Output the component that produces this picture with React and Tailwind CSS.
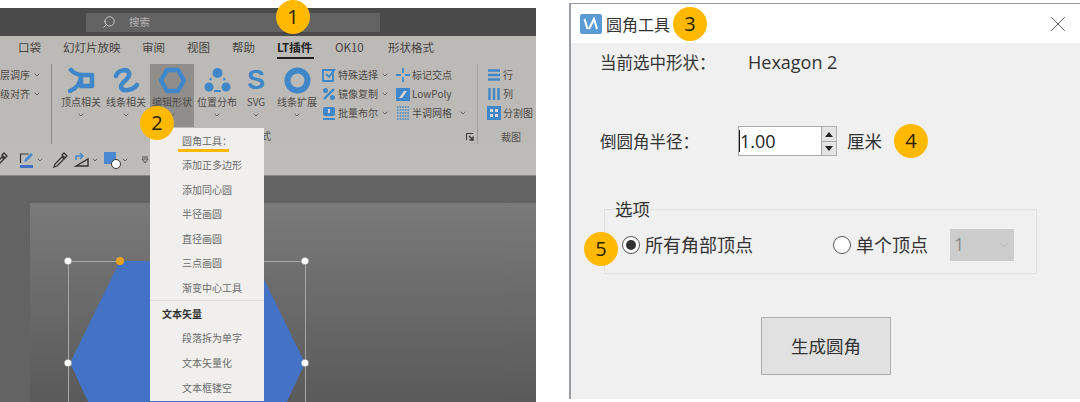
import { ChevronDown, Search, X } from 'lucide-react';

const cjk = 'font-["Noto_Sans_CJK_SC","Liberation_Sans",sans-serif]';
const BLUE = '#3f87c8';

function Badge({ n, className }) {
  return (
    <div className={`absolute flex h-[34px] w-[34px] items-center justify-center rounded-full bg-[#ffb900] font-["Open_Sans",sans-serif] text-[20px] text-[#2a2200] ${className}`}>
      {n}
    </div>
  );
}

function Caret({ className = '' }) {
  return <ChevronDown size={8} strokeWidth={2.5} className={`shrink-0 text-[#55534f] ${className}`} />;
}

function BigButton({ label, width, active, children }) {
  return (
    <div className={`flex h-[63px] flex-col items-center pt-[3px] ${width} ${active ? 'bg-[#8f8e8b]' : ''}`}>
      <div className="h-[27px] w-[27px]">{children}</div>
      <div className="mt-[1px] whitespace-nowrap text-[10px] leading-[14px] text-[#4d4b48]">{label}</div>
      <Caret className="mt-[2px]" />
    </div>
  );
}

function SmallItem({ icon, label, caret }) {
  return (
    <div className="flex h-[19px] items-center gap-[1px] whitespace-nowrap text-[10px] text-[#4d4b48]">
      <svg width="14" height="14" viewBox="0 0 14 14" className="shrink-0">{icon}</svg>
      <span className="ml-[1px]">{label}</span>
      {caret && <Caret className="ml-[2px]" />}
    </div>
  );
}

function MenuItem({ children, tall }) {
  return <div className={`flex items-center pl-[32px] text-[10px] text-[#6a6a6a] ${tall ? 'h-[25px]' : 'h-[24.5px]'}`}>{children}</div>;
}

function Tab({ children, width, active }) {
  return (
    <div className={`relative shrink-0 whitespace-nowrap text-[11.5px] ${width} ${active ? 'font-bold text-[#222]' : 'text-[#45433f]'}`}>
      {children}
      {active && <div className="absolute left-0 top-[18px] h-[2px] w-[37px] bg-[#222]" />}
    </div>
  );
}

function LeftPanel() {
  return (
    <div className={`relative flex h-[402px] w-[536px] shrink-0 flex-col overflow-hidden pt-2 ${cjk}`}>
      {/* title bar */}
      <div className="flex h-[28px] shrink-0 items-center bg-[#4a4a4a]">
        <div className="ml-[86px] flex h-[19px] w-[294px] items-center bg-[#636363] text-[10.5px] text-[#b5b5b5]">
          <Search size={14} strokeWidth={1.5} className="ml-[16px] -scale-x-100 text-[#d0d0d0]" />
          <span className="ml-[13px]">搜索</span>
        </div>
      </div>

      {/* tabs */}
      <div className="flex h-[28px] shrink-0 items-center bg-[#bcbab6] pl-[18px] pb-[4px]">
        <Tab width="w-[45px]">口袋</Tab>
        <Tab width="w-[79px]">幻灯片放映</Tab>
        <Tab width="w-[45px]">审阅</Tab>
        <Tab width="w-[45px]">视图</Tab>
        <Tab width="w-[45px]">帮助</Tab>
        <Tab width="w-[58px]" active>LT插件</Tab>
        <Tab width="w-[53px]">OK10</Tab>
        <Tab width="w-[60px]">形状格式</Tab>
      </div>

      {/* ribbon */}
      <div className="flex h-[80px] shrink-0 bg-[#bcbab6]">
        <div className="flex w-[52px] shrink-0 flex-col border-r border-[#8e8c88] pt-[1px] text-[10px] text-[#4d4b48]">
          <div className="flex h-[19px] items-center gap-[3px]">层调序<Caret /></div>
          <div className="flex h-[19px] items-center gap-[3px]">级对齐<Caret /></div>
        </div>
        <div className="ml-[8px] flex flex-col">
          <div className="flex gap-[3px]">
            <BigButton label="顶点相关" width="w-[42px]">
              <svg viewBox="0 0 27 27" fill="none" stroke={BLUE} strokeWidth="4.5" strokeLinecap="round" strokeLinejoin="round">
                <path d="M3 3c3 3 7 5 11 5h10v11H13V9c0 6-4 12-11 15" />
              </svg>
            </BigButton>
            <BigButton label="线条相关" width="w-[42px]">
              <svg viewBox="0 0 27 27" fill="none" stroke={BLUE} strokeWidth="4.5" strokeLinecap="round">
                <path d="M3 9c2-6 11-8 13-3 2 6-9 9-8 14 1 5 11 4 16-2" />
              </svg>
            </BigButton>
            <BigButton label="编辑形状" width="w-[44px]" active>
              <svg viewBox="0 0 27 27" fill="none" stroke={BLUE} strokeWidth="4.5" strokeLinejoin="round">
                <path d="M8 3h11l6 10.5L19 24H8L2 13.5z" />
              </svg>
            </BigButton>
            <BigButton label="位置分布" width="w-[40px]">
              <svg viewBox="0 0 27 27" fill={BLUE}>
                <circle cx="13.5" cy="6" r="5" />
                <circle cx="5" cy="20" r="4.5" />
                <circle cx="22" cy="20" r="4.5" />
                <path d="M7 10l-2 3 3 .6zM20 10l2 3-3 .6zM10 23h7v2h-7z" />
              </svg>
            </BigButton>
            <BigButton label="SVG" width="w-[32px]">
              <div className='text-center font-["Liberation_Sans",sans-serif] text-[27px] font-bold leading-[27px] text-[#3f87c8]'>S</div>
            </BigButton>
            <div className="ml-[1px]">
              <BigButton label="线条扩展" width="w-[42px]">
                <svg viewBox="0 0 27 27" fill="none" stroke={BLUE} strokeWidth="6">
                  <circle cx="13.5" cy="13.5" r="10" />
                </svg>
              </BigButton>
            </div>
          </div>
          <div className="mt-[2px] pl-[171px] text-[10px] leading-[14px] text-[#55534f]">形状格式</div>
        </div>

        <div className="ml-[4px] flex w-[74px] shrink-0 flex-col pt-[1px]">
          <SmallItem caret label="特殊选择" icon={<><path d="M1 2h10v11H1z" fill="none" stroke={BLUE} strokeWidth="1.8" /><path d="M4 6l3 3 6-8" fill="none" stroke={BLUE} strokeWidth="1.8" /></>} />
          <SmallItem caret label="镜像复制" icon={<><path d="M2 12L12 2" stroke={BLUE} strokeWidth="2.4" /><circle cx="3.5" cy="3.5" r="2.5" fill={BLUE} /><circle cx="10.5" cy="10.5" r="2.5" fill={BLUE} /></>} />
          <SmallItem caret label="批量布尔" icon={<><path d="M3 1h8a2 2 0 0 1 2 2v5a2 2 0 0 1-2 2H3a2 2 0 0 1-2-2V3a2 2 0 0 1 2-2z" fill={BLUE} /><path d="M6 3h2v4H6z" fill="#d8d6d2" /><path d="M1 12h12v2H1z" fill={BLUE} /></>} />
        </div>

        <div className="flex w-[82px] shrink-0 flex-col border-r border-[#a09e9a] pt-[1px]">
          <SmallItem label="标记交点" icon={<path d="M7 0v5M7 9v5M0 7h5M9 7h5" stroke={BLUE} strokeWidth="1.8" />} />
          <SmallItem label="LowPoly" icon={<><path d="M0 1h14v13H0z" fill={BLUE} /><path d="M3 11l5-7h3l-5 7z" fill="#d8d6d2" /></>} />
          <div className="flex items-center">
            <SmallItem label="半调网格" icon={<path d="M1 1h12M1 4h12M1 7h12M1 10h12M1 13h12" stroke={BLUE} strokeWidth="1.6" strokeDasharray="1.6 1" />} />
            <Caret className="ml-[7px]" />
          </div>
          <svg className="ml-auto mr-[3px] mt-[11px]" width="8" height="8" viewBox="0 0 8 8" fill="none" stroke="#3a3a3a">
            <path d="M.5 7V.5H7" />
            <path d="M3 3l3.5 3.5M7 3.5V7H3.5" strokeWidth="1.4" />
          </svg>
        </div>

        <div className="ml-[9px] flex flex-col pt-[1px]">
          <SmallItem label="行" icon={<path d="M1 2.5h12M1 7h12M1 11.5h12" stroke={BLUE} strokeWidth="2.4" />} />
          <SmallItem label="列" icon={<path d="M2.5 1v12M7 1v12M11.5 1v12" stroke={BLUE} strokeWidth="2.4" />} />
          <SmallItem label="分割图" icon={<><path d="M0 0h14v14H0z" fill={BLUE} /><path d="M3 3h3v3H3zM8 3h3v3H8zM3 8h3v3H3zM8 8h3v3H8z" fill="#d8d6d2" /></>} />
          <div className="mt-[8px] pl-[14px] text-[10px] leading-[14px] text-[#55534f]">裁图</div>
        </div>
      </div>

      {/* quick toolbar */}
      <div className="flex h-[32px] shrink-0 items-center border-b border-[#8a8885] bg-[#bebcb8]">
        <svg className="ml-[-7px] shrink-0" width="16" height="16" viewBox="0 0 16 16" fill="none" stroke="#333" strokeWidth="1.3">
          <path d="M1 15l1-3 7-7 2 2-7 7zM9 3l2-2 3 3-2 2z" />
        </svg>
        <svg className="ml-[10px] shrink-0" width="16" height="16" viewBox="0 0 16 16" fill="none" stroke="#333" strokeWidth="1.2">
          <path d="M1.5 11V2h8" />
          <path d="M1 14.5h13" stroke="#3f6fc4" strokeWidth="3" />
          <path d="M5 10l1-3 6-6 2 2-6 6z" fill="#4a88d0" stroke="none" />
        </svg>
        <Caret className="ml-[1px]" />
        <svg className="ml-[9px] shrink-0" width="16" height="16" viewBox="0 0 16 16" fill="none" stroke="#333" strokeWidth="1.3">
          <path d="M1 15l1-3 7-7 2 2-7 7zM9 3l2-2 3 3-2 2z" />
        </svg>
        <svg className="ml-[5px] shrink-0" width="16" height="16" viewBox="0 0 16 16" fill="none" strokeWidth="1.4">
          <path d="M2 14L14 7v7z" stroke="#333" />
          <path d="M2 8V4h6M6 1l3 3-3 3" stroke={BLUE} />
        </svg>
        <Caret className="ml-[1px]" />
        <div className="relative ml-[5px] h-[16px] w-[17px] shrink-0">
          <div className="h-[12px] w-[12px] bg-[#4a88d0]" />
          <div className="absolute bottom-[-1px] right-0 h-[10px] w-[10px] rounded-full border border-[#333] bg-white" />
        </div>
        <Caret />
        <svg className="ml-[12px] shrink-0" width="8" height="8" viewBox="0 0 8 8">
          <path d="M1 1h6" stroke="#55534f" />
          <path d="M1 3h6L4 7z" fill="none" stroke="#55534f" />
        </svg>
      </div>

      {/* canvas */}
      <div className="flex min-h-0 flex-1 flex-col bg-[#636363] pl-[30px] pt-[27px]">
        <div className="relative flex-1 bg-gradient-to-b from-[#7a7a7a] to-[#5a5a5a]">
          <svg className="absolute left-[-30px] top-0" width="506" height="199" viewBox="0 0 506 199">
            <rect x="68.5" y="58.5" width="237" height="160" fill="none" stroke="#a8a8a8" />
            <path d="M120 58h135l50 102-42 90H112L70 160z" fill="#4472c4" />
            {[[68, 58], [305, 58], [68, 160], [305, 160]].map(([cx, cy]) => (
              <circle key={cx + '-' + cy} cx={cx} cy={cy} r="3.6" fill="#fff" stroke="#999" strokeWidth="0.5" />
            ))}
            <circle cx="120" cy="58" r="4" fill="#e8a020" />
          </svg>
        </div>
      </div>

      {/* dropdown */}
      <div className="absolute left-[150px] top-[128px] w-[114px] bg-[#f0efee] pb-[1px]">
        <MenuItem>圆角工具：</MenuItem>
        <div className="absolute left-[28px] top-[21px] h-[3px] w-[51px] bg-[#ffb900]" />
        <MenuItem>添加正多边形</MenuItem>
        <MenuItem>添加同心圆</MenuItem>
        <MenuItem>半径画圆</MenuItem>
        <MenuItem>直径画圆</MenuItem>
        <MenuItem>三点画圆</MenuItem>
        <MenuItem>渐变中心工具</MenuItem>
        <div className="border-t border-[#dcdbd9] pl-[12px] pt-[1px] text-[10px] font-bold leading-[23px] text-[#333]">文本矢量</div>
        <MenuItem tall>段落拆为单字</MenuItem>
        <MenuItem tall>文本矢量化</MenuItem>
        <MenuItem tall>文本框镂空</MenuItem>
      </div>

      <Badge n="1" className="left-[276px] top-0" />
      <Badge n="2" className="left-[140px] top-[106px]" />
    </div>
  );
}

function Dialog() {
  return (
    <div className={`relative ml-[33px] mt-[3px] flex h-[396px] w-[511px] shrink-0 flex-col border-l-2 border-t border-[#9a9ca8] bg-[#f0f0f0] text-[16.5px] text-[#333] ${cjk}`}>
      <div className="flex h-[39px] shrink-0 items-center bg-white pl-[9px]">
        <svg width="22" height="20" viewBox="0 0 22 20">
          <rect width="22" height="20" rx="2" fill="#5b9bd5" />
          <path d="M4.5 5l3 10M9 15l5-10 3 10" fill="none" stroke="#fff" strokeWidth="2" />
        </svg>
        <span className="ml-[4px] text-[16px] text-[#333]">圆角工具</span>
        <X size={26} strokeWidth={0.9} className="ml-auto mr-[9px] text-[#555]" />
      </div>

      <div className="mt-[7px] flex h-[24px] items-center pl-[29px]">
        <span className="w-[148px]">当前选中形状：</span>
        <span className='font-["Open_Sans",sans-serif] text-[18px]'>Hexagon 2</span>
      </div>

      <div className="mt-[52px] flex h-[30px] items-center pl-[29px]">
        <span className="w-[138px]">倒圆角半径：</span>
        <div className="flex h-[30px] w-[84px] items-center border border-[#a8a8a8] bg-white">
          <span className="border-l border-[#111] font-['Open_Sans',sans-serif] text-[18px] leading-[22px] text-[#222]">1.00</span>
        </div>
        <div className="flex h-[30px] w-[15px] flex-col justify-center gap-[1px] border border-l-0 border-[#b0b0b0] bg-[#e4e4e4] text-center">
          <div className="mx-auto h-0 w-0 border-x-[4px] border-b-[5px] border-x-transparent border-b-[#222]" />
          <div className="my-[3px] h-px bg-[#aaa]" />
          <div className="mx-auto h-0 w-0 border-x-[4px] border-t-[5px] border-x-transparent border-t-[#222]" />
        </div>
        <span className="ml-[10px] text-[17.5px]">厘米</span>
      </div>

      <div className="relative ml-[33px] mt-[53px] flex h-[65px] w-[433px] items-center border border-[#e2e2e2] pl-[17px] pt-[6px]">
        <div className="absolute left-[9px] top-[-12px] bg-[#f0f0f0] px-[1px] text-[17.5px] leading-[22px]">选项</div>
        <div className="flex h-[18px] w-[18px] shrink-0 items-center justify-center rounded-full border border-[#555] bg-white">
          <div className="h-[10px] w-[10px] rounded-full bg-[#333]" />
        </div>
        <span className="ml-[5px] w-[188px] shrink-0 text-[18px]">所有角部顶点</span>
        <div className="h-[18px] w-[18px] shrink-0 rounded-full border border-[#555] bg-white" />
        <span className="ml-[5px] w-[94px] shrink-0 text-[18px]">单个顶点</span>
        <div className="flex h-[32px] w-[64px] shrink-0 items-center justify-between bg-[#cccccc] pl-[4px] pr-[3px] font-['Open_Sans',sans-serif] text-[#8a8a8a]">
          <span className="text-[18px]">1</span>
          <ChevronDown size={14} strokeWidth={1.2} className="text-[#aaa]" />
        </div>
      </div>

      <div className="ml-[190px] mt-[43px] flex h-[58px] w-[130px] items-center justify-center border border-[#adadad] bg-[#e1e1e1] text-[17.5px] text-[#333]">
        生成圆角
      </div>

      <Badge n="3" className="left-[102px] top-[3px]" />
      <Badge n="4" className="left-[323px] top-[120px]" />
      <Badge n="5" className="left-[13px] top-[228px]" />
    </div>
  );
}

export default function App() {
  return (
    <div className="flex h-[402px] w-[1080px] overflow-hidden bg-white">
      <LeftPanel />
      <Dialog />
    </div>
  );
}
